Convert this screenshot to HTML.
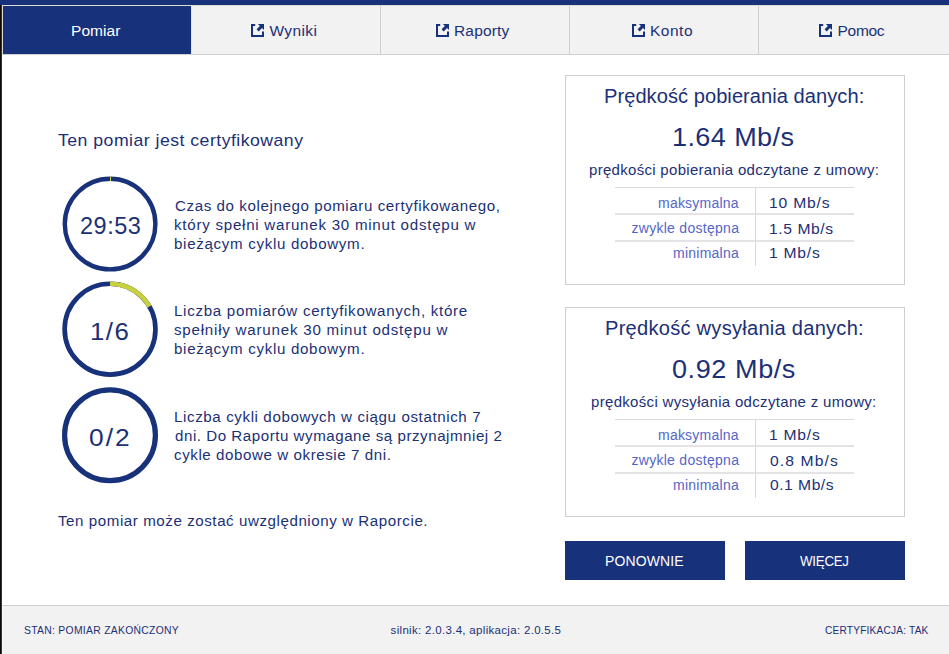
<!DOCTYPE html>
<html><head><meta charset="utf-8">
<style>
*{margin:0;padding:0;box-sizing:border-box}
html,body{width:949px;height:654px;overflow:hidden;background:#fff}
body{position:relative;font-family:"Liberation Sans",sans-serif;color:#1c3076}
.abs{position:absolute}
.t{position:absolute;white-space:nowrap;line-height:1}
.ico{position:absolute;top:24px;width:13px;height:13px}
.div{position:absolute;top:6px;width:1px;height:48px;background:#cfcdcf}
.box{position:absolute;left:565px;width:340px;height:210px;border:1px solid #cfcdcf}
.btn{position:absolute;top:541px;width:160px;height:39px;background:#17317a}
.row{position:absolute;left:615px;width:239px;height:1px;background:#d9d9d9}
.vl{position:absolute;left:755px;width:1px;height:79px;background:#d9d9d9}
</style></head><body>
<div class="abs" style="left:0;top:0;width:949px;height:5px;background:#17317a"></div>
<div class="abs" style="left:2px;top:5px;width:947px;height:50px;background:#f2f2f2;border-top:1px solid #dedbd4;border-left:1px solid #dedbd4;border-bottom:1px solid #cfcdcf"></div>
<div class="abs" style="left:3px;top:6px;width:188px;height:48px;background:#17317a"></div>
<div class="div" style="left:191px;background:#e4e2de"></div>
<div class="div" style="left:380px"></div>
<div class="div" style="left:569px"></div>
<div class="div" style="left:758px"></div>
<div class="t" style="left:71px;top:22.9px;font-size:15.5px;letter-spacing:0.06px;color:#ffffff;">Pomiar</div>
<svg class="ico" style="left:251px" viewBox="0 0 13 13"><path d="M0 0H4.2V2H2V11H11V7.5H13V13H0Z" fill="#17317a"/><path d="M6.9 0H13V6.1L11.01 4.11L7.7 7.42L5.58 5.3L8.89 1.99Z" fill="#17317a"/></svg>
<div class="t" style="left:269.4px;top:22.9px;font-size:15.5px;letter-spacing:0.4px;color:#1c3076;">Wyniki</div>
<svg class="ico" style="left:436px" viewBox="0 0 13 13"><path d="M0 0H4.2V2H2V11H11V7.5H13V13H0Z" fill="#17317a"/><path d="M6.9 0H13V6.1L11.01 4.11L7.7 7.42L5.58 5.3L8.89 1.99Z" fill="#17317a"/></svg>
<div class="t" style="left:454px;top:22.9px;font-size:15.5px;letter-spacing:0.16px;color:#1c3076;">Raporty</div>
<svg class="ico" style="left:632px" viewBox="0 0 13 13"><path d="M0 0H4.2V2H2V11H11V7.5H13V13H0Z" fill="#17317a"/><path d="M6.9 0H13V6.1L11.01 4.11L7.7 7.42L5.58 5.3L8.89 1.99Z" fill="#17317a"/></svg>
<div class="t" style="left:650px;top:22.9px;font-size:15.5px;letter-spacing:0.5px;color:#1c3076;">Konto</div>
<svg class="ico" style="left:819px" viewBox="0 0 13 13"><path d="M0 0H4.2V2H2V11H11V7.5H13V13H0Z" fill="#17317a"/><path d="M6.9 0H13V6.1L11.01 4.11L7.7 7.42L5.58 5.3L8.89 1.99Z" fill="#17317a"/></svg>
<div class="t" style="left:837.5px;top:22.9px;font-size:15.5px;letter-spacing:-0.282px;color:#1c3076;">Pomoc</div>
<div class="t" style="left:58px;top:131.6px;font-size:17px;letter-spacing:0.45px;color:#1c3076;transform:scaleX(1.04);transform-origin:0 0;">Ten pomiar jest certyfikowany</div>
<div class="t" style="left:174.7px;top:199.1px;font-size:14px;letter-spacing:0.544px;color:#1c3076;transform:scaleX(1.08);transform-origin:0 0;">Czas do kolejnego pomiaru certyfikowanego,</div>
<div class="t" style="left:174px;top:218.1px;font-size:14px;letter-spacing:0.69px;color:#1c3076;transform:scaleX(1.08);transform-origin:0 0;">który spełni warunek 30 minut odstępu w</div>
<div class="t" style="left:174px;top:237.1px;font-size:14px;letter-spacing:0.63px;color:#1c3076;transform:scaleX(1.08);transform-origin:0 0;">bieżącym cyklu dobowym.</div>
<div class="t" style="left:174px;top:304.1px;font-size:14px;letter-spacing:0.65px;color:#1c3076;transform:scaleX(1.08);transform-origin:0 0;">Liczba pomiarów certyfikowanych, które</div>
<div class="t" style="left:174px;top:323.1px;font-size:14px;letter-spacing:0.72px;color:#1c3076;transform:scaleX(1.08);transform-origin:0 0;">spełniły warunek 30 minut odstępu w</div>
<div class="t" style="left:174px;top:342.1px;font-size:14px;letter-spacing:0.63px;color:#1c3076;transform:scaleX(1.08);transform-origin:0 0;">bieżącym cyklu dobowym.</div>
<div class="t" style="left:174px;top:410.1px;font-size:14px;letter-spacing:0.56px;color:#1c3076;transform:scaleX(1.08);transform-origin:0 0;">Liczba cykli dobowych w ciągu ostatnich 7</div>
<div class="t" style="left:174.7px;top:429.1px;font-size:14px;letter-spacing:0.493px;color:#1c3076;transform:scaleX(1.08);transform-origin:0 0;">dni. Do Raportu wymagane są przynajmniej 2</div>
<div class="t" style="left:174px;top:448.1px;font-size:14px;letter-spacing:0.53px;color:#1c3076;transform:scaleX(1.08);transform-origin:0 0;">cykle dobowe w okresie 7 dni.</div>
<div class="t" style="left:58px;top:514.1px;font-size:14px;letter-spacing:0.52px;color:#1c3076;transform:scaleX(1.08);transform-origin:0 0;">Ten pomiar może zostać uwzględniony w Raporcie.</div>
<svg class="abs" style="left:0;top:0" width="949" height="654" viewBox="0 0 949 654">
<circle cx="110.1" cy="224.1" r="45.3" fill="none" stroke="#17317a" stroke-width="4.4"/>
<rect x="110" y="176.6" width="1" height="4.4" fill="#c8d13c"/>
<circle cx="110.05" cy="329.15" r="45.4" fill="none" stroke="#17317a" stroke-width="4.7"/>
<path d="M110.05 283.75 A45.4 45.4 0 0 1 149.37 306.45" fill="none" stroke="#c8d13c" stroke-width="4.7"/>
<circle cx="110" cy="435.2" r="45.4" fill="none" stroke="#17317a" stroke-width="5.2"/>
</svg>
<div class="t" style="left:80px;top:215.1px;font-size:23.5px;letter-spacing:0.5px;color:#1c3076;">29:53</div>
<div class="t" style="left:90px;top:320.6px;font-size:23.5px;letter-spacing:1.36px;color:#1c3076;transform:scaleX(1.1);transform-origin:0 0;">1/6</div>
<div class="t" style="left:89px;top:426.6px;font-size:23.5px;letter-spacing:1.79px;color:#1c3076;transform:scaleX(1.12);transform-origin:0 0;">0/2</div>
<div class="box" style="top:75px"></div>
<div class="row" style="top:187px"></div>
<div class="row" style="top:213px;height:2px;background:#e4e4e4"></div>
<div class="row" style="top:240px;height:2px;background:#e4e4e4"></div>
<div class="vl" style="top:187px"></div>
<div class="box" style="top:307px"></div>
<div class="row" style="top:419px"></div>
<div class="row" style="top:445px;height:2px;background:#e4e4e4"></div>
<div class="row" style="top:472px;height:2px;background:#e4e4e4"></div>
<div class="vl" style="top:419px"></div>
<div class="t" style="left:604.38px;top:86.5px;font-size:19.5px;letter-spacing:0.045px;color:#1c3076;transform:scaleX(1.03);transform-origin:0 0;">Prędkość pobierania danych:</div>
<div class="t" style="left:671.5px;top:124.0px;font-size:26px;letter-spacing:0.39px;color:#1c3076;transform:scaleX(1.04);transform-origin:0 0;">1.64 Mb/s</div>
<div class="t" style="left:589px;top:162.3px;font-size:15px;letter-spacing:0.3px;color:#1c3076;">prędkości pobierania odczytane z umowy:</div>
<div class="t" style="left:769.3px;top:195.7px;font-size:14.5px;letter-spacing:0.75px;color:#1c3076;transform:scaleX(1.08);transform-origin:0 0;">10 Mb/s</div>
<div class="t" style="left:769.3px;top:221.7px;font-size:14.5px;letter-spacing:0.53px;color:#1c3076;transform:scaleX(1.08);transform-origin:0 0;">1.5 Mb/s</div>
<div class="t" style="left:769.3px;top:246.2px;font-size:14.5px;letter-spacing:0.7px;color:#1c3076;transform:scaleX(1.08);transform-origin:0 0;">1 Mb/s</div>
<div class="t" style="left:605.04px;top:318.5px;font-size:19.5px;letter-spacing:0.247px;color:#1c3076;transform:scaleX(1.03);transform-origin:0 0;">Prędkość wysyłania danych:</div>
<div class="t" style="left:672.2px;top:356.0px;font-size:26px;letter-spacing:0.56px;color:#1c3076;transform:scaleX(1.04);transform-origin:0 0;">0.92 Mb/s</div>
<div class="t" style="left:591px;top:394.3px;font-size:15px;letter-spacing:0.32px;color:#1c3076;">prędkości wysyłania odczytane z umowy:</div>
<div class="t" style="left:769.3px;top:427.7px;font-size:14.5px;letter-spacing:0.7px;color:#1c3076;transform:scaleX(1.08);transform-origin:0 0;">1 Mb/s</div>
<div class="t" style="left:769.7px;top:453.7px;font-size:14.5px;letter-spacing:1.03px;color:#1c3076;transform:scaleX(1.08);transform-origin:0 0;">0.8 Mb/s</div>
<div class="t" style="left:769.7px;top:478.2px;font-size:14.5px;letter-spacing:0.46px;color:#1c3076;transform:scaleX(1.08);transform-origin:0 0;">0.1 Mb/s</div>
<div class="t" style="left:658px;top:195.6px;font-size:14px;letter-spacing:0.22px;color:#5466c6;">maksymalna</div>
<div class="t" style="left:631.5px;top:221.1px;font-size:14px;letter-spacing:0.28px;color:#5466c6;">zwykle dostępna</div>
<div class="t" style="left:673px;top:246.1px;font-size:14px;letter-spacing:0.25px;color:#5466c6;">minimalna</div>
<div class="t" style="left:658px;top:427.6px;font-size:14px;letter-spacing:0.22px;color:#5466c6;">maksymalna</div>
<div class="t" style="left:631.5px;top:453.1px;font-size:14px;letter-spacing:0.28px;color:#5466c6;">zwykle dostępna</div>
<div class="t" style="left:673px;top:478.1px;font-size:14px;letter-spacing:0.25px;color:#5466c6;">minimalna</div>
<div class="btn" style="left:565px"></div>
<div class="btn" style="left:745px"></div>
<div class="t" style="left:604.5px;top:552.9px;font-size:15.5px;letter-spacing:0.17px;color:#ffffff;transform:scaleX(0.9);transform-origin:0 0;">PONOWNIE</div>
<div class="t" style="left:800.2px;top:552.9px;font-size:15.5px;letter-spacing:-0.31px;color:#ffffff;transform:scaleX(0.86);transform-origin:0 0;">WIĘCEJ</div>
<div class="abs" style="left:2px;top:605px;width:947px;height:49px;background:#f2f2f2;border-top:1px solid #cfcdcf;border-left:1px solid #fafafa"></div>
<div class="t" style="left:24.04px;top:624.8px;font-size:11.5px;letter-spacing:0.331px;color:#1c3076;transform:scaleX(0.9);transform-origin:0 0;">STAN: POMIAR ZAKOŃCZONY</div>
<div class="t" style="left:390.6px;top:624.8px;font-size:11.5px;letter-spacing:0.31px;color:#1c3076;">silnik: 2.0.3.4, aplikacja: 2.0.5.5</div>
<div class="t" style="left:825.4px;top:624.8px;font-size:11.5px;letter-spacing:0.23px;color:#1c3076;transform:scaleX(0.88);transform-origin:0 0;">CERTYFIKACJA: TAK</div>
<div class="abs" style="left:0;top:5px;width:1px;height:649px;background:#0d0c08"></div>
<div class="abs" style="left:1px;top:0;width:1px;height:654px;background:#17317a"></div>
</body></html>
